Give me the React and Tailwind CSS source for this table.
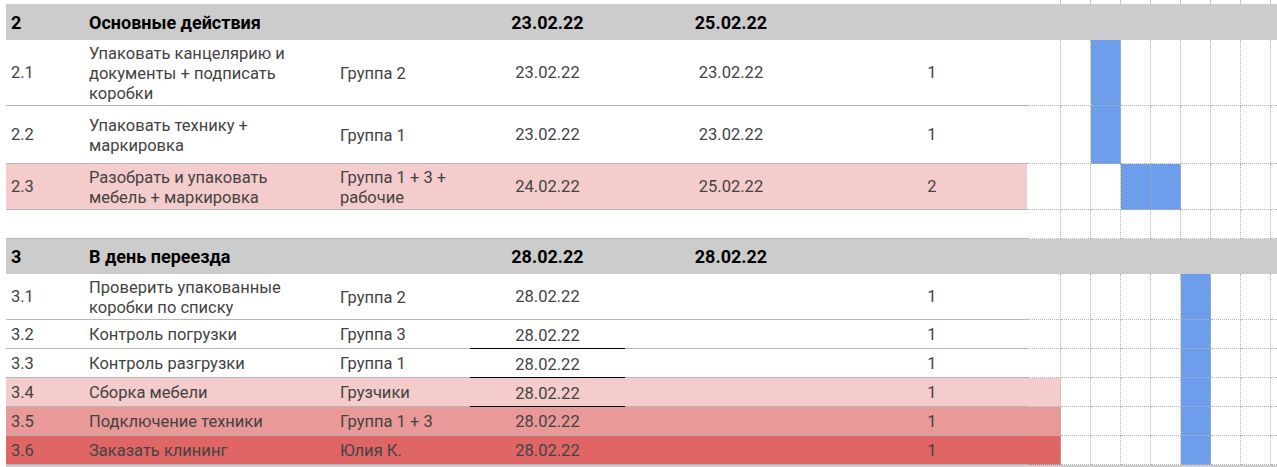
import React from 'react';
import clsx from 'clsx';

const COLS = {
  id: 'w-[78px] pl-[5px]',
  task: 'w-[251px] pl-[5px] pr-[24px]',
  group: 'w-[135px] pl-[5px] pr-[4px]',
  start: 'w-[155px] justify-center',
  end: 'w-[212px] justify-center',
  dur: 'w-[190px] justify-center',
};

const GANTT_W = ['w-[34px]', 'w-[30px]', 'w-[30px]', 'w-[30px]', 'w-[30px]', 'w-[30px]', 'w-[30px]', 'w-[30px]', 'flex-1'];

const Cell = ({ className, children, line = true, under = false }) => (
  <div
    className={clsx(
      'flex items-center shrink-0',
      line && 'border-b',
      line && (under ? 'border-black' : 'border-[#b7b7b7]'),
      className
    )}
  >
    {children}
  </div>
);

const Gantt = ({ bars = [], fill, bottom = true }) => (
  <div className="flex flex-1">
    {GANTT_W.map((w, i) => (
      <div
        key={i}
        className={clsx(
          w,
          'shrink-0 border-dotted border-[#b4b4b4]',
          i < 8 && 'border-r',
          bottom && 'border-b',
          bars.includes(i) ? 'bg-[#6d9eeb]' : i === 0 && fill
        )}
      />
    ))}
  </div>
);

const Header = ({ id, task, start, end, h }) => (
  <div className={clsx('flex pl-[6px]', h)}>
    <div className="flex flex-1 bg-[#cccccc] font-bold text-[18px] text-black">
      <Cell line={false} className={COLS.id}>{id}</Cell>
      <Cell line={false} className={COLS.task}>{task}</Cell>
      <Cell line={false} className={COLS.group} />
      <Cell line={false} className={COLS.start}>{start}</Cell>
      <Cell line={false} className={COLS.end}>{end}</Cell>
      <Cell line={false} className={COLS.dur} />
    </div>
  </div>
);

const Task = ({ id, task, group, start, end, dur, h, bg, bars, wide, under }) => (
  <div className={clsx('flex pl-[6px]', h)}>
    <div className={clsx('flex w-[1021px] shrink-0', bg)}>
      <Cell className={clsx(COLS.id, 'pt-[2px]')}>{id}</Cell>
      <Cell className={clsx(COLS.task, 'pt-[2px] leading-[20px]')}>{task}</Cell>
      <Cell className={clsx(COLS.group, 'pt-[2px] leading-[20px]')}>{group}</Cell>
      <Cell under={under} className={clsx(COLS.start, under ? 'pt-[5px]' : 'pt-[2px]')}>{start}</Cell>
      <Cell className={clsx(COLS.end, 'pt-[2px]')}>{end}</Cell>
      <Cell className={clsx(COLS.dur, 'pt-[2px]')}>{dur}</Cell>
    </div>
    <Gantt bars={bars} fill={wide ? bg : undefined} />
  </div>
);

export default function App() {
  return (
    <div className="w-[1277px] h-[467px] overflow-hidden bg-white font-['Roboto',sans-serif] text-[16.5px] text-[#434343]">
      <div className="flex h-[4px] pl-[6px]">
        <div className="w-[1021px] shrink-0" />
        <Gantt bottom={false} />
      </div>

      <Header id="2" task="Основные действия" start="23.02.22" end="25.02.22" h="h-[36px]" />
      <Task h="h-[66px]" id="2.1" task="Упаковать канцелярию и документы + подписать коробки" group="Группа 2" start="23.02.22" end="23.02.22" dur="1" bars={[2]} />
      <Task h="h-[58px]" id="2.2" task="Упаковать технику + маркировка" group="Группа 1" start="23.02.22" end="23.02.22" dur="1" bars={[2]} />
      <Task h="h-[46px]" id="2.3" task="Разобрать и упаковать мебель + маркировка" group="Группа 1 + 3 + рабочие" start="24.02.22" end="25.02.22" dur="2" bg="bg-[#f4cccc]" bars={[3, 4]} />
      <Task h="h-[29px]" />

      <Header id="3" task="В день переезда" start="28.02.22" end="28.02.22" h="h-[35px]" />
      <Task h="h-[46px]" id="3.1" task="Проверить упакованные коробки по списку" group="Группа 2" start="28.02.22" dur="1" bars={[5]} />
      <Task h="h-[29px]" id="3.2" task="Контроль погрузки" group="Группа 3" start="28.02.22" dur="1" bars={[5]} under />
      <Task h="h-[29px]" id="3.3" task="Контроль разгрузки" group="Группа 1" start="28.02.22" dur="1" bars={[5]} under />
      <Task h="h-[29px]" id="3.4" task="Сборка мебели" group="Грузчики" start="28.02.22" dur="1" bg="bg-[#f4cccc]" bars={[5]} wide under />
      <Task h="h-[29px]" id="3.5" task="Подключение техники" group="Группа 1 + 3" start="28.02.22" dur="1" bg="bg-[#ea9999]" bars={[5]} wide />
      <Task h="h-[29px]" id="3.6" task="Заказать клининг" group="Юлия К." start="28.02.22" dur="1" bg="bg-[#e06666]" bars={[5]} wide />

      <div className="ml-[6px] h-[2px] bg-[#cccccc]" />
    </div>
  );
}
